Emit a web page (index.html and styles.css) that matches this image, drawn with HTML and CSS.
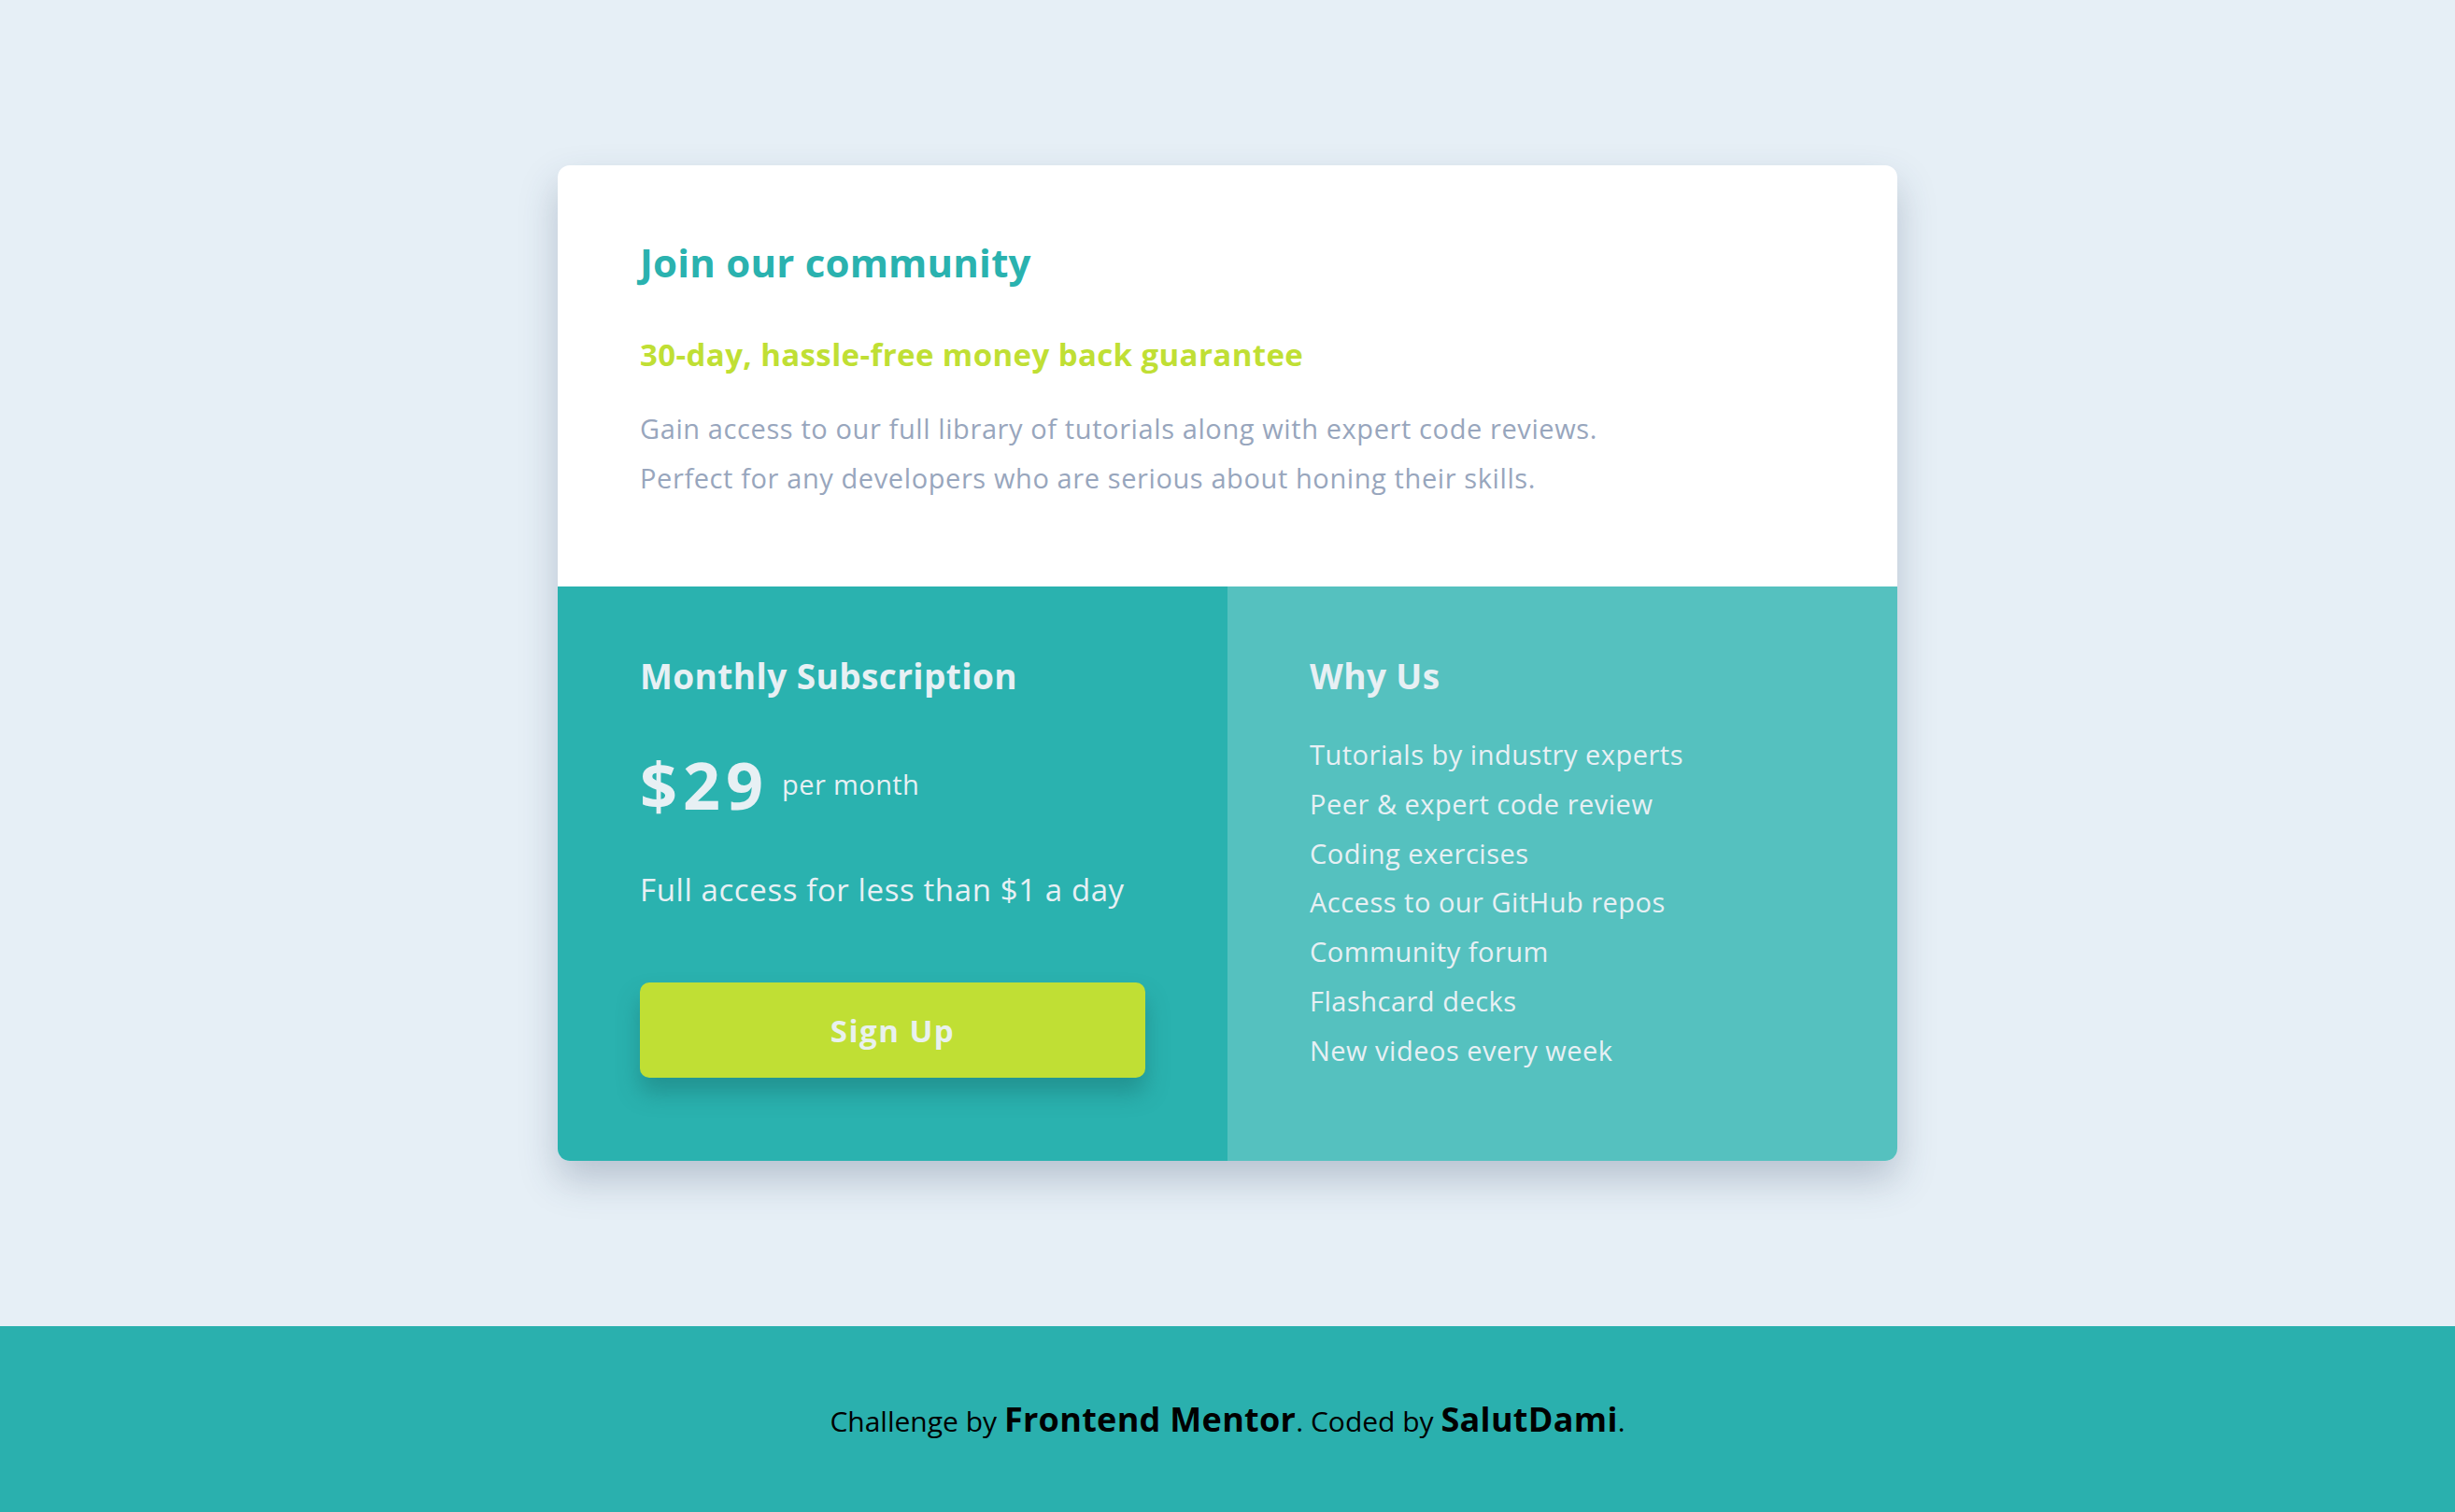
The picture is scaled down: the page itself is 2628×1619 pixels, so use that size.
FILE: index.html
```html
<!DOCTYPE html>
<html lang="en">
<head>
<meta charset="utf-8">
<title>Single Price Grid</title>
<link rel="stylesheet" href="styles.css">
</head>
<body>
<main class="page">
  <section class="card">
    <div class="intro">
      <h1 class="intro-title">Join our community</h1>
      <h2 class="intro-sub">30-day, hassle-free money back guarantee</h2>
      <p class="intro-text">Gain access to our full library of tutorials along with expert code reviews.<br>Perfect for any developers who are serious about honing their skills.</p>
    </div>
    <div class="bottom">
      <div class="sub">
        <h3 class="col-title">Monthly Subscription</h3>
        <div class="price-row">
          <span class="price">$29</span>
          <span class="per">per month</span>
        </div>
        <p class="sub-text">Full access for less than $1 a day</p>
        <button class="btn">Sign Up</button>
      </div>
      <div class="why">
        <h3 class="col-title">Why Us</h3>
        <ul class="why-list">
          <li>Tutorials by industry experts</li>
          <li>Peer &amp; expert code review</li>
          <li>Coding exercises</li>
          <li>Access to our GitHub repos</li>
          <li>Community forum</li>
          <li>Flashcard decks</li>
          <li>New videos every week</li>
        </ul>
      </div>
    </div>
  </section>
</main>
<footer class="footer">
  <p class="attr">Challenge by <a class="attr-link" href="#">Frontend Mentor</a>. Coded by <a class="attr-link" href="#">SalutDami</a>.</p>
</footer>
</body>
</html>
```
FILE: styles.css
```css
* { box-sizing: border-box; }
html, body { margin: 0; padding: 0; }
body {
  background: #e6eff6;
  font-family: "Open Sans", "Liberation Sans", sans-serif;
}
.page {
  height: 1420px;
  display: flex;
  align-items: center;
  justify-content: center;
}
.card {
  width: 1434px;
  border-radius: 13px;
  overflow: hidden;
  background: #fff;
  box-shadow: 0 20px 40px rgba(50, 70, 100, 0.26);
}
.intro {
  height: 451px;
  padding: 80px 88px 0;
}
.intro-title {
  margin: 0;
  font-size: 42px;
  line-height: 47px;
  font-weight: 700;
  letter-spacing: 0.2px;
  color: #2ab2af;
}
.intro-sub {
  margin: 56px 0 0;
  font-size: 33px;
  line-height: 40px;
  font-weight: 700;
  letter-spacing: 0.4px;
  color: #c0df34;
}
.intro-text {
  margin: 32px 0 0;
  font-size: 29px;
  line-height: 53px;
  letter-spacing: 0.6px;
  color: #98a6bd;
}
.bottom {
  display: flex;
  height: 615px;
}
.sub, .why {
  width: 50%;
  padding: 74px 88px 88px;
  color: #e7f0f4;
}
.sub { background: #2ab2af; }
.why { background: #55c1bf; }
.col-title {
  margin: 0;
  font-size: 37px;
  line-height: 44px;
  font-weight: 700;
  letter-spacing: 0.4px;
}
.price-row {
  display: flex;
  align-items: center;
  gap: 14px;
  margin-top: 62px;
  height: 64px;
}
.price {
  font-size: 70px;
  line-height: 64px;
  font-weight: 700;
  letter-spacing: 6px;
}
.per {
  font-size: 29px;
  line-height: 36px;
  letter-spacing: 0.4px;
}
.sub-text {
  margin: 59px 0 0;
  font-size: 33px;
  line-height: 44px;
  letter-spacing: 0.6px;
}
.btn {
  display: block;
  width: 100%;
  height: 102px;
  margin-top: 77px;
  border: 0;
  border-radius: 10px;
  background: #c0df34;
  color: #e9f1ee;
  font-family: inherit;
  font-size: 33px;
  font-weight: 700;
  letter-spacing: 1.5px;
  box-shadow: 0 16px 24px rgba(20, 90, 90, 0.35);
}
.why-list {
  list-style: none;
  margin: 36px 0 0;
  padding: 0;
  font-size: 29px;
  line-height: 52.8px;
  letter-spacing: 0.5px;
}
.footer {
  height: 199px;
  background: #2ab0ae;
  display: flex;
  align-items: center;
  justify-content: center;
}
.attr {
  margin: 0;
  font-size: 30px;
  color: #000;
}
.attr-link {
  color: #000;
  text-decoration: none;
  font-size: 36px;
  font-weight: 700;
  letter-spacing: 0.3px;
}
```
